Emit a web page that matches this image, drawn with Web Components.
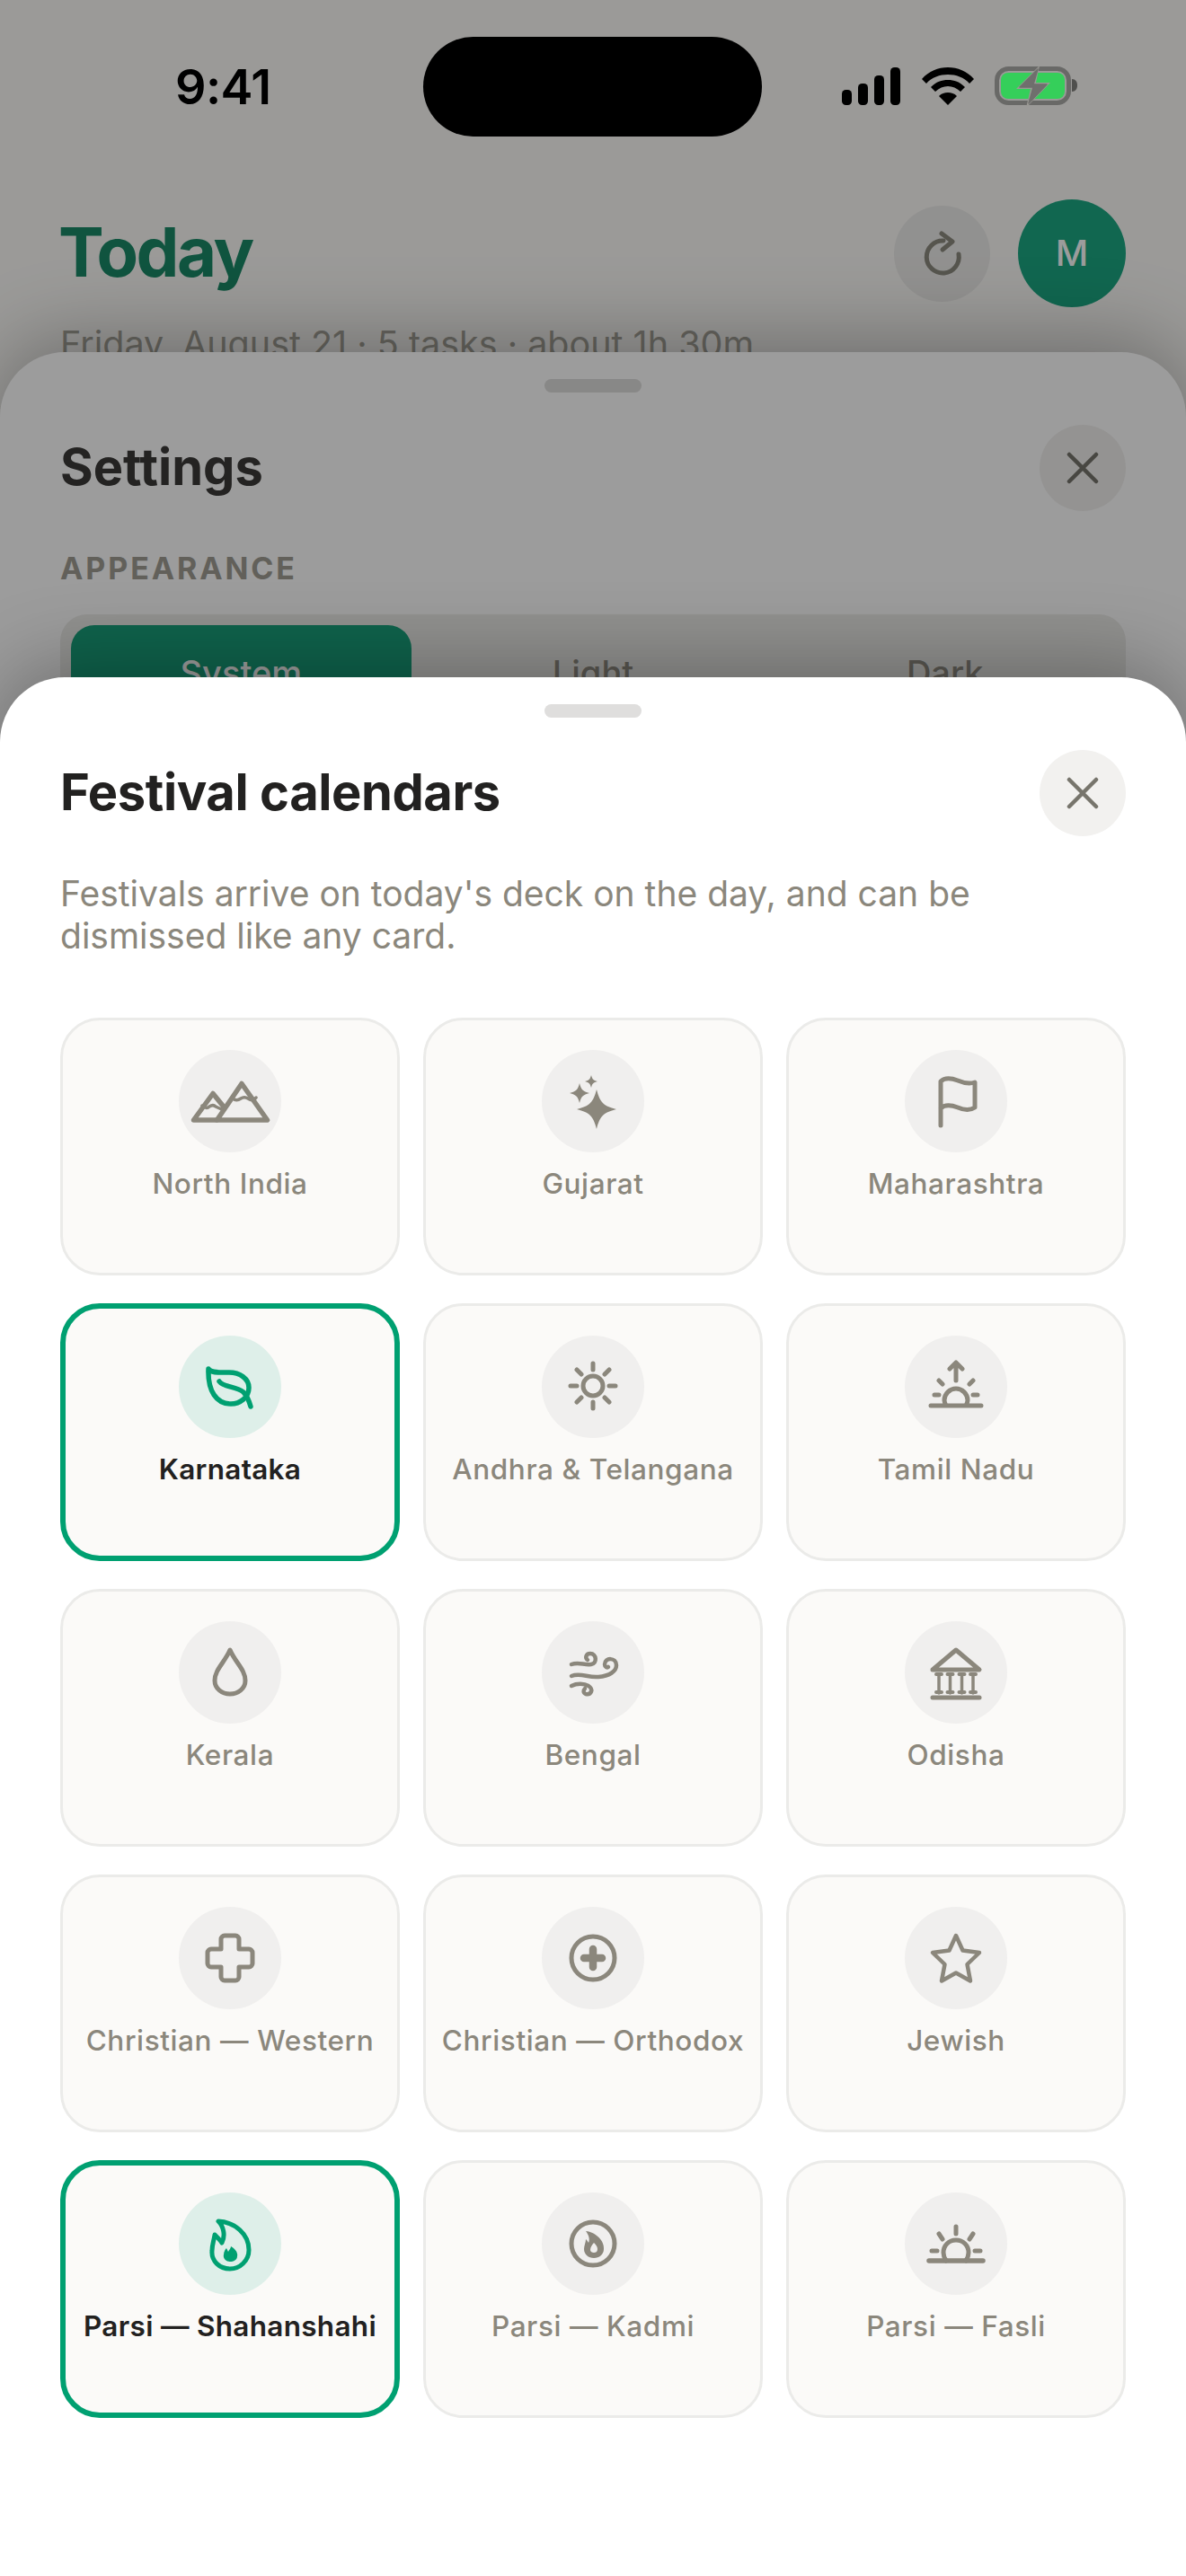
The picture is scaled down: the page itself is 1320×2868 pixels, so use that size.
<!DOCTYPE html>
<html lang="en">
<head>
<meta charset="utf-8">
<title>Festival calendars</title>
<style>
  html, body { margin: 0; padding: 0; background: #fbfaf8; }
  body { font-family: Inter, "Noto Sans", sans-serif; }
</style>
</head>
<body>
<phone-screen>
  <home-header slot="home" title="Today" sub="Friday, August 21 · 5 tasks · about 1h 30m" initial="M"></home-header>

  <sheet-panel slot="settings" heading="Settings" top="392" style="--title-track: 0px; --title-color: #3b3a38">
    <section-label>APPEARANCE</section-label>
    <segment-control>
      <span slot="a">System</span><span slot="b">Light</span><span slot="c">Dark</span>
    </segment-control>
  </sheet-panel>

  <status-bar slot="status" time="9:41"></status-bar>

  <sheet-panel slot="top" heading="Festival calendars" top="754" style="--title-track: -.4px">
    <p-note>Festivals arrive on today's deck on the day, and can be dismissed like any card.</p-note>
    <card-grid>
      <fest-card icon="mountains">North India</fest-card>
      <fest-card icon="sparkles">Gujarat</fest-card>
      <fest-card icon="flag">Maharashtra</fest-card>
      <fest-card icon="leaf" selected>Karnataka</fest-card>
      <fest-card icon="sun">Andhra &amp; Telangana</fest-card>
      <fest-card icon="sunrise">Tamil Nadu</fest-card>
      <fest-card icon="drop">Kerala</fest-card>
      <fest-card icon="wind">Bengal</fest-card>
      <fest-card icon="temple">Odisha</fest-card>
      <fest-card icon="cross">Christian — Western</fest-card>
      <fest-card icon="crossring">Christian — Orthodox</fest-card>
      <fest-card icon="star">Jewish</fest-card>
      <fest-card icon="flame" selected>Parsi — Shahanshahi</fest-card>
      <fest-card icon="flamering">Parsi — Kadmi</fest-card>
      <fest-card icon="sunset">Parsi — Fasli</fest-card>
    </card-grid>
  </sheet-panel>
</phone-screen>

<script>
/* ICONS - drawn on the 114px circle */
function star4(cx, cy, r) {
  const k = r * 0.17;
  return `M${cx} ${cy - r}C${cx + k} ${cy - k * 2} ${cx + k * 2} ${cy - k} ${cx + r} ${cy}C${cx + k * 2} ${cy + k} ${cx + k} ${cy + k * 2} ${cx} ${cy + r}C${cx - k} ${cy + k * 2} ${cx - k * 2} ${cy + k} ${cx - r} ${cy}C${cx - k * 2} ${cy - k} ${cx - k} ${cy - k * 2} ${cx} ${cy - r}Z`;
}
const ICONS = {
  mountains: `<path stroke-width="5.500" d="M42 78H16.500L38 48.500L49 62"/><path stroke-width="5.500" d="M70 37.500L98.500 78H42.500Z"/>
    <path stroke-width="3.500" d="M59 53c4 4 7 3 10 1c3-2 5-2 8 0c3 2 6 3 9-1M26 62c3 3 6 3 8 1c3-2 5-2 7 0c2 1 4 2 7 3"/>`,
  sparkles: `<path fill="currentColor" stroke="none" d="${star4(61, 66, 22)}"/><path fill="currentColor" stroke="none" d="${star4(42, 48, 11)}"/><path fill="currentColor" stroke="none" d="${star4(55, 35, 7)}"/>`,
  flag: `<path d="M40 84V35C44 31 51 31 59 34C66 37 72 38 78 36V64C72 68 66 67 59 64C51 61 44 61 40 65"/>`,
  leaf: `<path stroke-width="5.500" d="M33 37C36 42 46 41 56 41C68 41 78 48 78 58C78 69 68 76 58 76C42 76 32 62 33 37Z"/><path stroke-width="5.500" d="M45 51C50 58 64 56 72 63C76 67 78 72 80 79"/>`,
  sun: `<circle cx="57" cy="56" r="11"/><path d="M57 31v7M57 74v7M32 56h7M75 56h7M39 38l5 5M70 69l5 5M39 74l5-5M70 43l5-5"/>`,
  sunrise: `<path d="M29 78h56M46 78c-1-2-2-4-2-6c0-7 6-13 13-13s13 6 13 13c0 2-1 4-2 6M57 50V30M50 37l7-7l7 7M33 66h5M76 66h5M38 50l4 4M76 50l-4 4"/>`,
  drop: `<path d="M57 32C51 46 40 54 40 66C40 75 48 81 57 81C66 81 74 75 74 66C74 54 63 46 57 32Z"/>`,
  wind: `<path stroke-width="4.500" d="M33 48c8-3 14 1 22 0c7-1 6-12-1-12c-5 0-6 5-3 7"/><path stroke-width="4.500" d="M33 61c10-4 18 2 30 1c12-1 20-6 20-13c0-9-13-9-13-1c0 3 3 4 4 3"/><path stroke-width="4.500" d="M33 72c6-3 14-3 19 0c6 4 3 10-3 9c-3-1-3-4-1-6"/>`,
  temple: `<path d="M57 32L83 54H31Z"/><path stroke-width="3.500" d="M38 60V80M50.500 60V80M63.500 60V80M76 60V80"/>
    <path stroke-width="4" d="M35 59h6M47.500 59h6M60.500 59h6M73 59h6M35 79h6M47.500 79h6M60.500 79h6M73 79h6"/><path stroke-width="5" d="M31 85h52"/>`,
  cross: `<path d="M47 36a4 4 0 0 1 4-4h12a4 4 0 0 1 4 4v11h11a4 4 0 0 1 4 4v12a4 4 0 0 1-4 4H67v11a4 4 0 0 1-4 4H51a4 4 0 0 1-4-4V67H36a4 4 0 0 1-4-4V51a4 4 0 0 1 4-4h11Z"/>`,
  crossring: `<circle cx="57" cy="57" r="24"/><path stroke-width="8.500" d="M57 47v20M47 57h20"/>`,
  star: `<path stroke-width="4.500" d="M57 32L64.500 48.500L83 51L69.500 64L73 82.500L57 73.500L41 82.500L44.500 64L31 51L49.500 48.500Z"/>`,
  flame: `<path stroke-width="5" d="M44 32C62 33 78 46 78 64C78 76 68 85 57 85C45 85 36 76 37 65C37 58 39 54 40 47C43 50 46 53 48 56C52 48 50 38 44 32Z"/>
    <path fill="currentColor" stroke="none" d="M58 60C63 63 66 67 65 71C65 75 61 77 57 77C52 77 49 73 50 69C50 66 52 63 53 62L55 66C56 64 58 62 58 60Z"/>`,
  flamering: `<circle cx="57" cy="57" r="24"/><path fill="currentColor" stroke="none" fill-rule="evenodd" d="M49 43C60 44 70 54 69 63C69 69 64 73 58 73C52 73 47 69 47 63C47 59 49 56 49 52C50 53 51 54 52 56C54 52 52 47 49 43ZM58 56C56 58 54 61 54 64C54 66 56 67 58 67C60 67 62 66 62 63C62 60 60 58 58 56Z"/>`,
  sunset: `<path stroke-width="5.500" d="M27 76h60"/><path d="M46 76c-2-3-3-6-3-9c0-8 6-14 14-14s14 6 14 14c0 3-1 6-3 9M57 38v8M38 46l4 6M76 46l-4 6M30 65h6M78 65h6"/>`
};

/* PHONE SCREEN - layers: home, first sheet, scrim, status bar, top sheet */
class PhoneScreen extends HTMLElement {
  constructor() {
    super();
    this.attachShadow({ mode: "open" }).innerHTML = `
      <style>
        :host { display: block; position: relative; width: 1320px; height: 2868px; overflow: hidden; background: #fdfcf9; }
        .scrim { position: absolute; inset: 0; background: rgba(0,0,0,.39); }
      </style>
      <slot name="home"></slot>
      <slot name="settings"></slot>
      <div class="scrim"></div>
      <slot name="status"></slot>
      <slot name="top"></slot>`;
  }
}

/* STATUS BAR */
class StatusBar extends HTMLElement {
  constructor() {
    super();
    this.attachShadow({ mode: "open" }).innerHTML = `
      <style>
        :host { display: block; position: absolute; top: 0; left: 0; right: 0; height: 160px; }
        .bar { display: flex; align-items: flex-start; height: 100%; box-sizing: border-box; padding-top: 41px; }
        .time { width: 471px; box-sizing: border-box; padding: 29px 0 0 195px; font: 600 54px/1 Inter, sans-serif; letter-spacing: -.6px; color: #000; }
        .island { width: 377px; height: 111px; border-radius: 56px; background: #000; }
        .icons { margin: 34px 0 0 89px; display: flex; gap: 22px; align-items: flex-start; }
        svg { display: block; }
      </style>
      <div class="bar">
        <div class="time">${this.getAttribute("time")}</div>
        <div class="island"></div>
        <div class="icons">
          <svg width="66" height="42" viewBox="0 0 66 42" fill="#000" style="margin-right:1px">
            <rect x="0" y="25" width="11" height="17" rx="4.500"/><rect x="18" y="18" width="11" height="24" rx="4.500"/>
            <rect x="36" y="9" width="11" height="33" rx="4.500"/><rect x="54" y="0" width="11" height="42" rx="4.500"/>
          </svg>
          <svg width="58" height="42" viewBox="0 0 58 42" fill="#000">
            <path d="M29 0C40 0 50 4 58 13L53 18C47 11 38 8 29 8S11 11 5 18L0 13C8 4 18 0 29 0Z"/>
            <path d="M29 14C36 14 42 16 48 22L43 27C39 23 34 21 29 21S19 23 15 27L10 22C16 16 22 14 29 14Z"/>
            <path d="M29 28C33 28 36 29 39 32L29 42L19 32C22 29 25 28 29 28Z"/>
          </svg>
          <svg width="94" height="44" viewBox="0 0 94 44" style="margin:-1px 0 0 1px">
            <rect x="2.500" y="2.500" width="80" height="38" rx="13" fill="none" stroke="#696967" stroke-width="5"/>
            <rect x="7" y="7" width="71" height="29" rx="8" fill="#35cf5a"/>
            <path d="M86 14c4 0 6 3 6 7s-2 7-6 7Z" fill="#4f4f4d"/>
            <path d="M50 -1L24 25H40L35 46L62 18H46Z" fill="#9a9994"/>
            <path d="M48 3L28 23H43L38 41L58 20H43Z" fill="#6f6f6d" stroke="#6f6f6d" stroke-width="1.500" stroke-linejoin="round"/>
          </svg>
        </div>
      </div>`;
  }
}

/* HOME HEADER */
class HomeHeader extends HTMLElement {
  constructor() {
    super();
    this.attachShadow({ mode: "open" }).innerHTML = `
      <style>
        :host { display: block; padding: 222px 67px 0; }
        .row { display: flex; align-items: center; justify-content: space-between; height: 120px; }
        h1 { margin: -4px 0 0 -2px; font: 700 76px/1 Inter, sans-serif; letter-spacing: -2.400px; color: #1b8a68; }
        .actions { display: flex; align-items: center; gap: 31px; }
        .refresh { width: 107px; height: 107px; border-radius: 50%; background: #eeedeb; display: flex; align-items: center; justify-content: center; color: #8d8b80; }
        .avatar { width: 120px; height: 120px; border-radius: 50%; background: #1ca883; color: #fff; display: flex; align-items: center; justify-content: center; font: 500 40px/1 Inter, sans-serif; }
        p { margin: 18px 0 0; font: 400 39.500px/46px Inter, sans-serif; color: #a8a69c; }
      </style>
      <div class="row">
        <h1>${this.getAttribute("title")}</h1>
        <div class="actions">
          <div class="refresh">
            <svg width="44" height="54" viewBox="0 0 44 54" fill="none" stroke="currentColor" stroke-width="5" stroke-linecap="round" stroke-linejoin="round">
              <path d="M23 13A18 18 0 1 0 40 28"/><path d="M21 5L33 14L22 23"/>
            </svg>
          </div>
          <div class="avatar">${this.getAttribute("initial")}</div>
        </div>
      </div>
      <p>${this.getAttribute("sub")}</p>`;
  }
}

/* SHEET */
class SheetPanel extends HTMLElement {
  constructor() {
    super();
    const top = this.getAttribute("top");
    this.attachShadow({ mode: "open" }).innerHTML = `
      <style>
        :host { display: block; position: absolute; left: 0; right: 0; top: ${top}px; bottom: 0; background: #fff; border-radius: 72px 72px 0 0; box-shadow: 0 -12px 90px rgba(0,0,0,.3); padding: 30px 67px 0; box-sizing: border-box; color: #222120; }
        .handle { width: 108px; height: 15px; border-radius: 8px; background: #dfdedd; margin: 0 auto; }
        header { display: flex; align-items: center; justify-content: space-between; margin-top: 36px; height: 96px; }
        h2 { margin: -3px 0 0; font: 700 56px/1 Inter, sans-serif; letter-spacing: var(--title-track, 0); color: var(--title-color, #222120); }
        .close { width: 96px; height: 96px; border-radius: 50%; background: #f2f1ef; display: flex; align-items: center; justify-content: center; color: #77756c; }
      </style>
      <div class="handle"></div>
      <header>
        <h2>${this.getAttribute("heading")}</h2>
        <div class="close">
          <svg width="36" height="36" viewBox="0 0 36 36" fill="none" stroke="currentColor" stroke-width="4.500" stroke-linecap="round"><path d="M3 3L33 33M33 3L3 33"/></svg>
        </div>
      </header>
      <slot></slot>`;
  }
}

class SectionLabel extends HTMLElement {
  constructor() {
    super();
    this.attachShadow({ mode: "open" }).innerHTML = `
      <style>:host { display: block; margin-top: 47px; font: 700 34px/34px Inter, sans-serif; letter-spacing: 2.900px; color: #a09e94; }</style>
      <slot></slot>`;
  }
}

class SegmentControl extends HTMLElement {
  constructor() {
    super();
    this.attachShadow({ mode: "open" }).innerHTML = `
      <style>
        :host { display: block; margin-top: 34px; }
        .wrap { display: grid; grid-template-columns: repeat(3, 1fr); column-gap: 13px; padding: 12px; height: 130px; border-radius: 30px; background: #eeedea; box-sizing: border-box; font: 500 38px/1 Inter, sans-serif; color: #928f85; }
        .seg { display: flex; align-items: center; justify-content: center; border-radius: 26px; height: 106px; }
        .on { background: #1aa27c; color: #fff; }
      </style>
      <div class="wrap">
        <div class="seg on"><slot name="a"></slot></div>
        <div class="seg"><slot name="b"></slot></div>
        <div class="seg"><slot name="c"></slot></div>
      </div>`;
  }
}

class PNote extends HTMLElement {
  constructor() {
    super();
    this.attachShadow({ mode: "open" }).innerHTML = `
      <style>:host { display: block; margin-top: 40px; font: 400 39px/47px Inter, sans-serif; color: #8b877c; }</style>
      <slot></slot>`;
  }
}

/* CALENDAR GRID */
class CardGrid extends HTMLElement {
  constructor() {
    super();
    this.attachShadow({ mode: "open" }).innerHTML = `
      <style>:host { display: grid; grid-template-columns: repeat(3, 378px); gap: 31px 26px; margin-top: 68px; }</style>
      <slot></slot>`;
  }
}

class FestCard extends HTMLElement {
  constructor() {
    super();
    this.attachShadow({ mode: "open" }).innerHTML = `
      <style>
        :host { display: flex; flex-direction: column; align-items: center; box-sizing: border-box; height: 287px; padding-top: 33px; border: 3px solid #ebebe9; border-radius: 44px; background: #fbfaf8; color: #8b877c; font: 500 31.500px/38px Inter, sans-serif; letter-spacing: .6px; white-space: nowrap; }
        :host([selected]) { border: 6px solid #00a071; padding-top: 30px; color: #222120; font-weight: 600; letter-spacing: .3px; }
        .disc { width: 114px; height: 114px; border-radius: 50%; background: #f0efee; color: #8b877c; margin-bottom: 16px; }
        :host([selected]) .disc { background: #deefe9; color: #00a071; }
        svg { display: block; }
      </style>
      <div class="disc">
        <svg width="114" height="114" viewBox="0 0 114 114" fill="none" stroke="currentColor" stroke-width="5" stroke-linecap="round" stroke-linejoin="round">${ICONS[this.getAttribute("icon")]}</svg>
      </div>
      <slot></slot>`;
  }
}

customElements.define("phone-screen", PhoneScreen);
customElements.define("status-bar", StatusBar);
customElements.define("home-header", HomeHeader);
customElements.define("sheet-panel", SheetPanel);
customElements.define("section-label", SectionLabel);
customElements.define("segment-control", SegmentControl);
customElements.define("p-note", PNote);
customElements.define("card-grid", CardGrid);
customElements.define("fest-card", FestCard);
</script>
</body>
</html>
